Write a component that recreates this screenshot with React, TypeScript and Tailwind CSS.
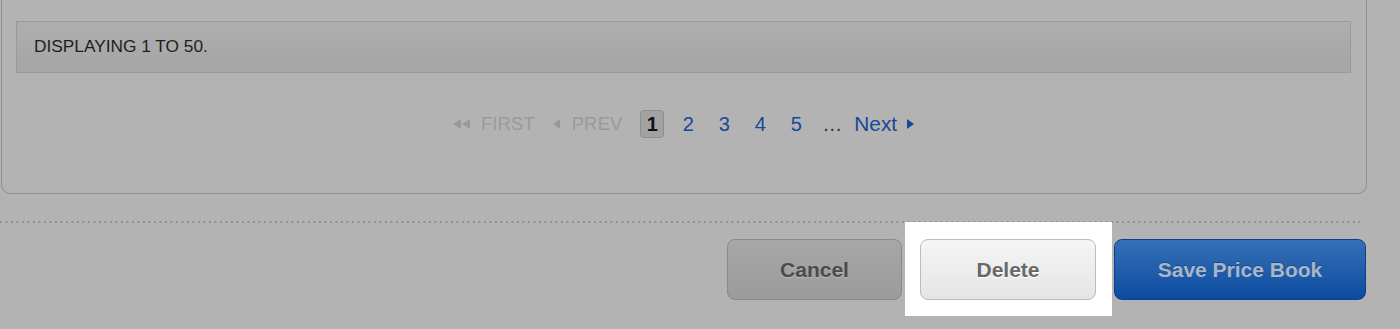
const font = "font-['Liberation_Sans',Arial,sans-serif]";

function TriLeft({ double }: { double?: boolean }) {
  return double ? (
    <svg width="17" height="10" viewBox="0 0 17 10" className="shrink-0">
      <path d="M8 0v10L0 5z" fill="#999999" />
      <path d="M17 0v10L9 5z" fill="#999999" />
    </svg>
  ) : (
    <svg width="7" height="10" viewBox="0 0 7 10" className="shrink-0">
      <path d="M7 0v10L0 5z" fill="#999999" />
    </svg>
  );
}

function Pagination() {
  const pages = [2, 3, 4, 5];
  return (
    <div className="flex items-center justify-center text-[20px] leading-none">
      <span className="flex items-center gap-[11px] text-[18.6px] text-[#9a9a9a]">
        <TriLeft double />
        FIRST
      </span>
      <span className="ml-[18px] flex items-center gap-[12px] text-[18.6px] text-[#9a9a9a]">
        <TriLeft />
        PREV
      </span>
      <span className="ml-[18px] flex h-[28px] w-[24px] items-center justify-center rounded-[4px] border border-[#8e8e8e] bg-[#a2a2a2] font-bold text-[#111]">
        1
      </span>
      {pages.map((p) => (
        <span key={p} className="ml-[12px] w-[24px] text-center text-[#17479a]">
          {p}
        </span>
      ))}
      <span className="ml-[12px] w-[24px] text-center text-[#333]">…</span>
      <span className="ml-[10px] flex items-center gap-[10px] text-[20.8px] text-[#17479a]">
        Next
        <svg width="7" height="10" viewBox="0 0 7 10" className="shrink-0">
          <path d="M0 0v10l7-5z" fill="#17479a" />
        </svg>
      </span>
    </div>
  );
}

export default function App() {
  return (
    <main className={`h-[329px] w-[1400px] overflow-hidden bg-[#b3b3b3] ${font}`}>
      {/* Results panel */}
      <section className="ml-px w-[1366px] rounded-b-[9px] border-x border-b border-[#8f8f8f] pb-[55px] pl-[14px] pr-[15px] pt-[21px]">
        <div className="flex h-[52px] items-center border border-[#999] bg-gradient-to-b from-[#aeaeae] to-[#a5a5a5] pl-[17px] text-[17.3px] text-[#1e1e1e]">
          DISPLAYING 1 TO 50.
        </div>
        <div className="mt-[37px]">
          <Pagination />
        </div>
      </section>

      {/* Divider */}
      <div className="mt-[27px] h-[2px] w-[1363px] bg-[linear-gradient(to_right,#8d8d8d_2px,transparent_2px)] bg-size-[5.5px_2px]" />

      {/* Actions */}
      <div className="mt-[16px] flex w-[1366px] justify-end gap-[18px] text-[21px] font-bold">
        <button className="h-[61px] w-[175px] rounded-[8px] border border-[#8a8a8a] bg-gradient-to-b from-[#a7a7a7] to-[#9b9b9b] text-[#4b4b4b] [text-shadow:0_1px_0_rgba(255,255,255,0.25)]">
          Cancel
        </button>
        <div className="relative">
          <div className="absolute -bottom-[16px] -left-[15px] -right-[16px] -top-[17px] bg-white" />
          <button className="relative h-[61px] w-[176px] rounded-[8px] border border-[#bcbcbc] bg-gradient-to-b from-[#f5f5f5] to-[#e5e5e5] text-[#686868] [text-shadow:0_1px_0_#fff]">
            Delete
          </button>
        </div>
        <button className="h-[61px] w-[252px] rounded-[8px] border border-[#0d3f8a] bg-gradient-to-b from-[#3571b6] to-[#0a4a9f] text-[#a9b6c8] [text-shadow:0_-1px_0_rgba(0,0,0,0.25)]">
          Save Price Book
        </button>
      </div>
    </main>
  );
}
